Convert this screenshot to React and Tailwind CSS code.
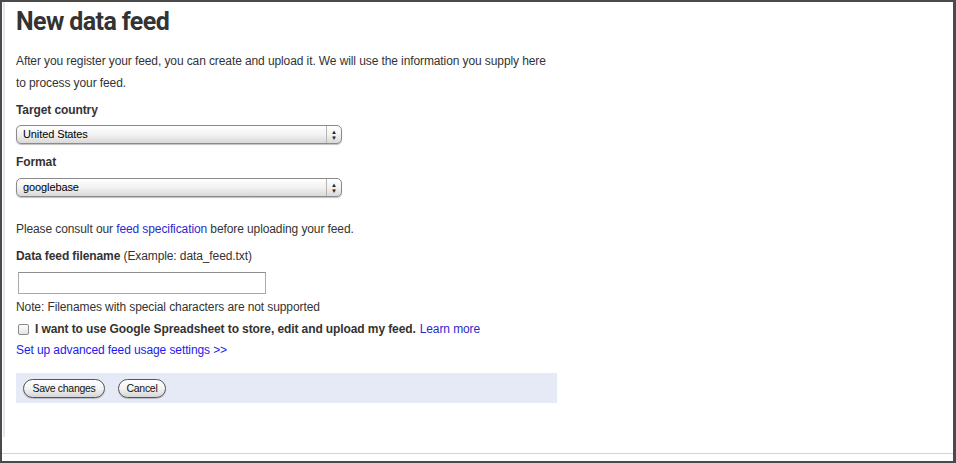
import React from 'react';

const body = { fontFamily: '"Liberation Sans", Arial, sans-serif' };

function MacSelect({ value }) {
  return (
    <div className="flex items-center w-[326px] h-[19px] rounded-[5px] border border-[#8a8a8a] bg-gradient-to-b from-white via-[#f2f2f2] to-[#d9d9d9] shadow-[0_1px_1px_rgba(0,0,0,0.25)]">
      <span className="flex-1 pl-[6px] text-[11px] text-black leading-none">{value}</span>
      <span className="w-[15px] h-full border-l border-[#b5b5b5] flex flex-col items-center justify-center text-[6px] leading-[6px] text-[#222]">
        <span>▲</span>
        <span>▼</span>
      </span>
    </div>
  );
}

function PillButton({ children, w }) {
  return (
    <button className={`${w} h-[19px] rounded-full border border-[#555] bg-gradient-to-b from-white via-[#f3f3f3] to-[#d6d6d6] text-[10.5px] tracking-[-0.3px] text-[#111] leading-none shadow-[0_1px_1px_rgba(0,0,0,0.2)]`}>
      {children}
    </button>
  );
}

export default function App() {
  return (
    <div className="w-[956px] h-[463px] bg-white border-2 border-r-[3px] border-[#4a4a4a] flex flex-col" style={body}>
      <div className="h-[435px] ml-[1px] border-l-2 border-[#e2e6ef] pl-[11px] text-[12px] tracking-[-0.1px] text-[#333]">
        <h1 className="mt-[4px] text-[25px] leading-[32px] font-bold text-[#333] tracking-[-0.6px]" style={{ fontFamily: 'Roboto, sans-serif' }}>
          New data feed
        </h1>
        <p className="mt-[12px] leading-[22px] w-[540px]">
          After you register your feed, you can create and upload it. We will use the information you supply here to process your feed.
        </p>
        <div className="mt-[5px] font-bold leading-[22px]">Target country</div>
        <div className="mt-[4px]"><MacSelect value="United States" /></div>
        <div className="mt-[7px] font-bold leading-[22px]">Format</div>
        <div className="mt-[5px]"><MacSelect value="googlebase" /></div>
        <p className="mt-[21px] leading-[22px]">
          Please consult our <a className="text-[#2a2acc]">feed specification</a> before uploading your feed.
        </p>
        <p className="mt-[5px] leading-[22px]">
          <span className="font-bold">Data feed filename</span> (Example: data_feed.txt)
        </p>
        <div className="mt-[5px] ml-[2px] w-[248px] h-[22px] border border-[#a9a9a9] border-t-[#8e8e8e] bg-white" />
        <p className="mt-[2px] leading-[22px]">Note: Filenames with special characters are not supported</p>
        <div className="flex items-center leading-[22px]">
          <span className="ml-[2px] w-[11px] h-[11px] rounded-[2px] border border-[#8a8a8a] bg-gradient-to-b from-white to-[#e4e4e4]" />
          <span className="ml-[6px] font-bold">I want to use Google Spreadsheet to store, edit and upload my feed.</span>
          <a className="ml-[4px] text-[#2a2acc]">Learn more</a>
        </div>
        <div className="leading-[21px] text-[#1a1aee]">Set up advanced feed usage settings &gt;&gt;</div>
        <div className="mt-[12px] w-[541px] h-[30px] bg-[#e6e9f6] flex items-center gap-[13px] pl-[7px]">
          <PillButton w="w-[82px]">Save changes</PillButton>
          <PillButton w="w-[48px]">Cancel</PillButton>
        </div>
      </div>
      <div className="mt-[16px] h-px bg-[#c8d3ef]" />
    </div>
  );
}
